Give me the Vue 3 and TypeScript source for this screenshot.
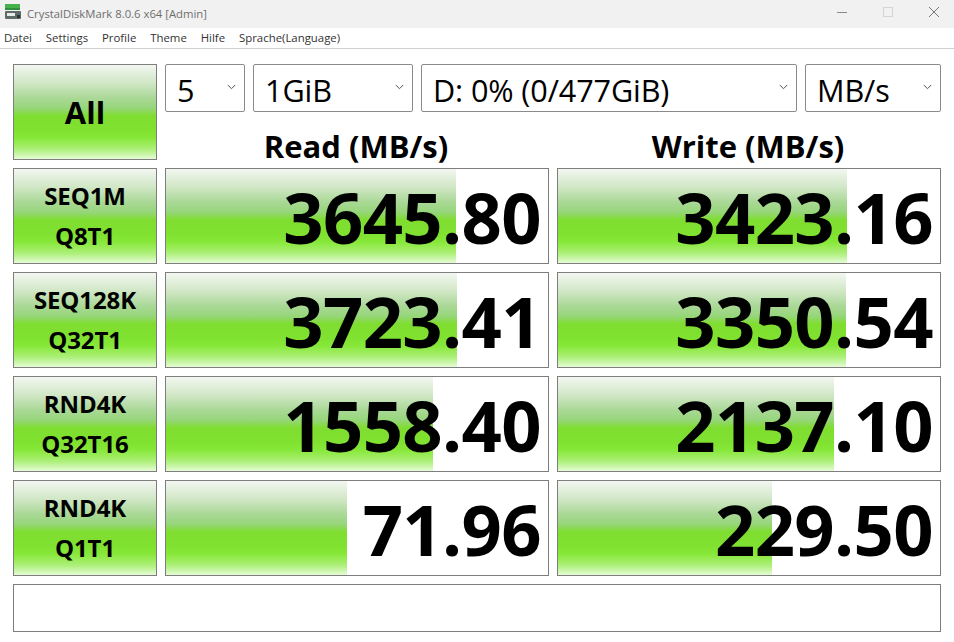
<script setup lang="ts">
interface Row { a: string; b: string; read: string; readW: number; write: string; writeW: number }
const rows: Row[] = [
  { a: 'SEQ1M', b: 'Q8T1', read: '3645.80', readW: 290, write: '3423.16', writeW: 289 },
  { a: 'SEQ128K', b: 'Q32T1', read: '3723.41', readW: 291, write: '3350.54', writeW: 288 },
  { a: 'RND4K', b: 'Q32T16', read: '1558.40', readW: 267, write: '2137.10', writeW: 276 },
  { a: 'RND4K', b: 'Q1T1', read: '71.96', readW: 181, write: '229.50', writeW: 214 },
]
const menus = ['Datei', 'Settings', 'Profile', 'Theme', 'Hilfe', 'Sprache(Language)']
const combos = [
  { t: '5', c: 'c1' },
  { t: '1GiB', c: 'c2' },
  { t: 'D: 0% (0/477GiB)', c: 'c3' },
  { t: 'MB/s', c: 'c4' },
]
</script>

<template>
  <div class="win">
    <header class="title">
      <svg class="logo" width="18" height="18" viewBox="0 0 18 18">
        <rect x="0" y="0" width="15" height="4" fill="#46b04a" />
        <rect x="0" y="4" width="15" height="2" fill="#2f8f3c" />
        <rect x="0" y="7" width="16" height="8" rx="1" fill="#5f6b66" />
        <rect x="2" y="9" width="8" height="3" fill="#e8ece9" />
        <rect x="12" y="11" width="3" height="3" fill="#2c3431" />
      </svg>
      <span class="title-text">CrystalDiskMark 8.0.6 x64 [Admin]</span>
      <div class="caps">
        <svg width="12" height="12" viewBox="0 0 12 12"><path d="M1 6.5h10" stroke="#8a8a8a" fill="none" /></svg>
        <svg width="12" height="12" viewBox="0 0 12 12"><rect x="1.5" y="1.5" width="9" height="9" stroke="#d4d4d4" fill="none" /></svg>
        <svg width="12" height="12" viewBox="0 0 12 12"><path d="M1 1l10 10M11 1L1 11" stroke="#777" fill="none" /></svg>
      </div>
    </header>
    <nav class="menu">
      <span v-for="m in menus" :key="m">{{ m }}</span>
    </nav>
    <main class="body">
      <section class="top">
        <button class="btn all">All</button>
        <div class="controls">
          <div class="combos">
            <div v-for="c in combos" :key="c.t" class="combo" :class="c.c">
              <span>{{ c.t }}</span>
              <svg width="9" height="6" viewBox="0 0 9 6"><path d="M.8 1l3.7 3.7L8.2 1" stroke="#555" fill="none" /></svg>
            </div>
          </div>
          <div class="heads">
            <div>Read (MB/s)</div>
            <div>Write (MB/s)</div>
          </div>
        </div>
      </section>
      <section v-for="r in rows" :key="r.a + r.b" class="row">
        <button class="btn label"><span>{{ r.a }}</span><span>{{ r.b }}</span></button>
        <div class="meter" :style="{ backgroundSize: r.readW + 'px 100%' }">{{ r.read }}</div>
        <div class="meter" :style="{ backgroundSize: r.writeW + 'px 100%' }">{{ r.write }}</div>
      </section>
      <div class="comment"></div>
    </main>
  </div>
</template>

<style scoped>
.win {
  --bar: linear-gradient(#f3f7f1 0%, #cfe6c4 20%, #a8d894 36%, #96d67a 46%, #7fdd30 54%, #80e230 70%, #88e83a 78%, #aef07c 90%, #e6fbd6 100%);
  width: 954px;
  height: 642px;
  background: #fff;
  font-family: "Open Sans", "Noto Sans", sans-serif;
  color: #000;
  overflow: hidden;
}
.title {
  height: 28px;
  background: #f1f1f1;
  display: flex;
  align-items: center;
  padding-left: 5px;
  padding-bottom: 2px;
  box-sizing: border-box;
}
.logo { margin-right: 4px; }
.title-text { font-size: 11.3px; color: #6e6e6e; }
.caps {
  margin-left: auto;
  display: flex;
  gap: 34px;
  padding-right: 14px;
  margin-top: -2px;
}
.menu {
  height: 18px;
  border-bottom: 1px solid #cfcfcf;
  display: flex;
  align-items: center;
  gap: 13.9px;
  padding-left: 4px;
  padding-bottom: 2px;
  font-size: 11.4px;
  color: #333;
}
.body {
  padding: 15px 13px 0;
  display: flex;
  flex-direction: column;
  gap: 8px;
}
.top, .row {
  display: grid;
  grid-template-columns: 144px 384px 384px;
  column-gap: 8px;
}
.top { grid-template-columns: 144px 776px; }
.btn {
  display: flex;
  padding: 0;
  box-sizing: border-box;
  border: 1px solid #7e7e7e;
  background: var(--bar);
  font-family: inherit;
  color: #000;
  font-weight: 700;
  align-items: center;
  justify-content: center;
}
.all { height: 96px; font-size: 31px; }
.controls { display: flex; flex-direction: column; }
.combos { display: flex; gap: 8px; height: 48px; }
.combo {
  box-sizing: border-box;
  height: 48px;
  border: 1px solid #8a8a8a;
  border-radius: 2px;
  display: flex;
  align-items: center;
  justify-content: space-between;
  padding: 0 8px 0 11px;
  font-size: 30.6px;
  letter-spacing: -0.1px;
}
.combo span { padding-top: 3px; }
.combo svg { flex: none; margin-top: -2px; }
.c1 { width: 80px; }
.c2 { width: 160px; }
.c3 { width: 376px; }
.c4 { width: 136px; }
.heads {
  display: grid;
  grid-template-columns: 382px 386px;
  column-gap: 8px;
  height: 48px;
  box-sizing: border-box;
  padding-top: 19px;
  align-items: center;
  text-align: center;
  font-size: 31px;
  line-height: 28px;
  font-weight: 700;
}
.row { height: 96px; }
.label {
  flex-direction: column;
  font-size: 24px;
  gap: 4px;
  line-height: 36px;
  letter-spacing: -0.1px;
}
.meter {
  box-sizing: border-box;
  border: 1px solid #7e7e7e;
  background-color: #fff;
  background-image: var(--bar);
  background-repeat: no-repeat;
  background-position: left top;
  display: flex;
  align-items: center;
  justify-content: flex-end;
  padding-right: 7px;
  padding-top: 3px;
  font-size: 70.5px;
  font-weight: 700;
  letter-spacing: -0.6px;
  line-height: 1;
}
.comment {
  width: 928px;
  height: 48px;
  box-sizing: border-box;
  border: 1px solid #7e7e7e;
}
</style>
